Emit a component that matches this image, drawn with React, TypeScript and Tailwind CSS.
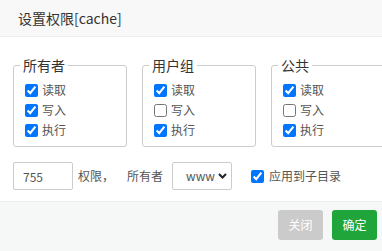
import React from "react";

type Perm = { label: string; checked: boolean };

const groups: { title: string; perms: Perm[] }[] = [
  {
    title: "所有者",
    perms: [
      { label: "读取", checked: true },
      { label: "写入", checked: true },
      { label: "执行", checked: true },
    ],
  },
  {
    title: "用户组",
    perms: [
      { label: "读取", checked: true },
      { label: "写入", checked: false },
      { label: "执行", checked: true },
    ],
  },
  {
    title: "公共",
    perms: [
      { label: "读取", checked: true },
      { label: "写入", checked: false },
      { label: "执行", checked: true },
    ],
  },
];

const font = { fontFamily: '"Noto Sans CJK SC", "Noto Sans", sans-serif' };

const App = () => {
  return (
    <div className="w-[382px] h-[251px] overflow-hidden bg-white" style={font}>
      <div className="h-[37px] bg-[#f8f8f8] border-b border-[#eeeeee] pl-[18px] flex items-center text-[14px] text-[#333]">
        设置权限[cache]
      </div>

      <div className="pt-[19px] pl-[13px] pb-[11px]">
        <div className="flex gap-[15px] w-[600px]">
          {groups.map((g) => (
            <fieldset
              key={g.title}
              className="w-[114px] shrink-0 border border-[#cccccc] rounded-[3px] pl-[11px] pt-[6px] pb-[6px]"
            >
              <legend className="-ml-[5px] px-[3px] text-[14px] leading-[18px] text-[#333]">
                {g.title}
              </legend>
              {g.perms.map((p) => (
                <label
                  key={p.label}
                  className="h-[20px] flex items-center gap-[4px] text-[12px] text-[#555]"
                >
                  <input
                    type="checkbox"
                    defaultChecked={p.checked}
                    className="m-0 w-[13px] h-[13px]"
                  />
                  {p.label}
                </label>
              ))}
            </fieldset>
          ))}
        </div>

        <div className="mt-[15px] flex items-center text-[12px] text-[#555]">
          <input
            defaultValue="755"
            className="w-[60px] h-[28px] border border-[#cccccc] rounded-[2px] pl-[9px] text-[12px] text-[#555] outline-none"
          />
          <span className="ml-[5px]">权限，</span>
          <span className="ml-[13px]">所有者</span>
          <div className="ml-[9px] w-[60px] h-[28px] border border-[#cccccc] rounded-[2px] flex items-center pl-[13px] gap-[3px] text-[#555]">
            <span>www</span>
            <svg width="9" height="6" viewBox="0 0 9 6">
              <path d="M1 1l3.5 3.5L8 1" fill="none" stroke="#222" strokeWidth="2" />
            </svg>
          </div>
          <label className="ml-[19px] flex items-center gap-[5px] text-[12px] text-[#555]">
            <input type="checkbox" defaultChecked className="m-0 w-[13px] h-[13px]" />
            应用到子目录
          </label>
        </div>
      </div>

      <div className="h-[60px] bg-[#f6f8f8] border-t border-[#eeeeee] pt-[8px] pr-[5px] flex justify-end gap-[9px]">
        <button className="w-[45px] h-[30px] rounded-[3px] bg-[#cbcbcb] text-white text-[12px]">
          关闭
        </button>
        <button className="w-[45px] h-[30px] rounded-[3px] bg-[#20a53a] text-white text-[12px]">
          确定
        </button>
      </div>
    </div>
  );
};

export default App;
